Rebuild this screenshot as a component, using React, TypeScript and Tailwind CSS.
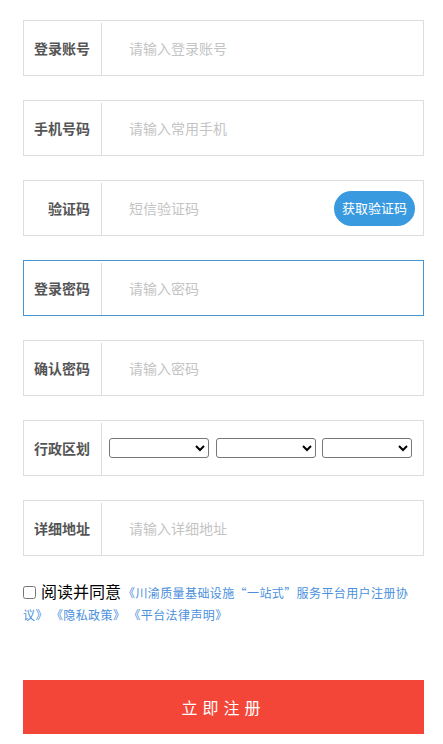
import React from 'react';

const font = { fontFamily: '"Noto Sans CJK SC", "Noto Sans", sans-serif' };

function Row({ label, children, focused }: { label: string; children: React.ReactNode; focused?: boolean }) {
  return (
    <div className={`flex h-14 border ${focused ? 'border-[#4a95d0]' : 'border-[#dddddd]'}`}>
      <div className="w-[77px] flex items-center justify-end pr-[11px] text-[14px] font-bold text-[#555555]">
        {label}
      </div>
      <div className="w-px mt-[2px] bg-[#dddddd]" />
      <div className="flex-1 flex items-center">{children}</div>
    </div>
  );
}

function TextInput({ placeholder, type = 'text' }: { placeholder: string; type?: string }) {
  return (
    <input
      type={type}
      placeholder={placeholder}
      className="flex-1 h-full min-w-0 pl-[27px] text-[14px] text-[#333] placeholder:text-[#c4c4c4] outline-none"
    />
  );
}

export default function App() {
  return (
    <div className="w-[443px] bg-white pl-[23px] pr-[19px] pt-[20px]" style={font}>
      <div className="flex flex-col gap-6">
        <Row label="登录账号">
          <TextInput placeholder="请输入登录账号" />
        </Row>
        <Row label="手机号码">
          <TextInput placeholder="请输入常用手机" />
        </Row>
        <Row label="验证码">
          <TextInput placeholder="短信验证码" />
          <button className="mr-[8px] w-[81px] h-[35px] rounded-full bg-[#3a9ae0] text-white text-[13px]">
            获取验证码
          </button>
        </Row>
        <Row label="登录密码" focused>
          <TextInput placeholder="请输入密码" type="password" />
        </Row>
        <Row label="确认密码">
          <TextInput placeholder="请输入密码" type="password" />
        </Row>
        <Row label="行政区划">
          <div className="flex items-center pl-[7px]">
            <select className="w-[100px] h-[20px] border border-[#767676] rounded-[3px] text-[13px]" />
            <select className="ml-[7px] w-[100px] h-[20px] border border-[#767676] rounded-[3px] text-[13px]" />
            <select className="ml-[6px] w-[90px] h-[20px] border border-[#767676] rounded-[3px] text-[13px]" />
          </div>
        </Row>
        <Row label="详细地址">
          <TextInput placeholder="请输入详细地址" />
        </Row>
      </div>

      <div className="mt-[25px] leading-[21px]">
        <label className="text-[16px] text-black">
          <input type="checkbox" className="w-[13px] h-[13px] align-[-1px] mr-[5px]" />
          阅读并同意
        </label>
        <span className="text-[12px] text-[#4a8fdc] ml-[2px] tracking-[0.4px]">
          《川渝质量基础设施“一站式”服务平台用户注册协议》 《隐私政策》 《平台法律声明》
        </span>
      </div>

      <button className="mt-[55px] w-full h-[54px] bg-[#f44638] text-white text-[16px] tracking-[5px]">
        立即注册
      </button>
    </div>
  );
}
